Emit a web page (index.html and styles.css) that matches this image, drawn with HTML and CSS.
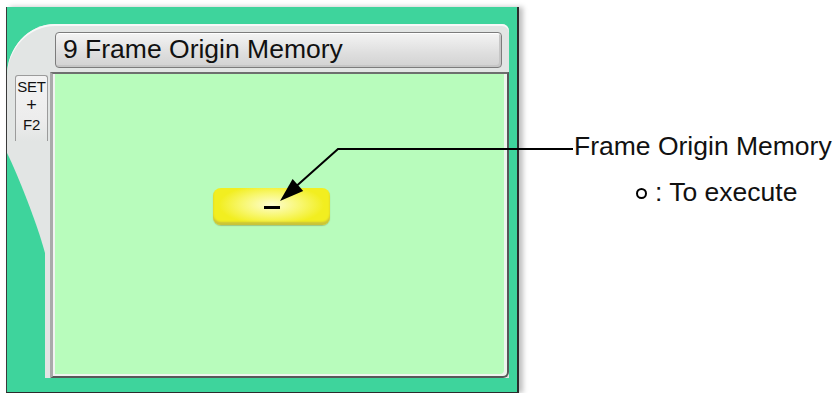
FILE: index.html
```html
<!DOCTYPE html>
<html lang="en">
<head>
    <meta charset="UTF-8">
    <meta name="viewport" content="width=device-width, initial-scale=1.0">
    <title>Frame Origin Memory</title>
    <link rel="stylesheet" href="styles.css">
</head>
<body>
    <div class="screen">
        <div class="frame">
            <div class="side">
                <div class="tab">
                    <span class="tab-line">SET</span>
                    <span class="tab-plus">+</span>
                    <span class="tab-line">F2</span>
                </div>
                <div class="tail">
                    <div class="tail-curve"></div>
                    <div class="tail-green"></div>
                </div>
            </div>
            <div class="main">
                <div class="title-bar">9 Frame Origin Memory</div>
                <div class="content">
                    <div class="value-box"><span class="dash"></span></div>
                </div>
            </div>
        </div>
    </div>

    <div class="notes">
        <p class="note-title">Frame Origin Memory</p>
        <p class="note-line"><span class="ring"></span>: To execute</p>
    </div>

    <!-- callout arrow -->
    <svg class="callout" width="838" height="393" viewBox="0 0 838 393">
        <polyline points="573,149 338,149 292,190" fill="none" stroke="#000" stroke-width="2"/>
        <polygon points="280,201 292.6,179 303.2,191" fill="#000"/>
    </svg>
</body>
</html>
```

FILE: styles.css
```css
body {
    font-family: 'Liberation Sans', Arial, sans-serif;
    background-color: #ffffff;
    margin: 0;
    padding: 0;
    width: 838px;
    height: 393px;
    overflow: hidden;
    position: relative;
    display: flex;
    align-items: flex-start;
}

.screen {
    margin: 7px 0 0 6px;
    padding: 17px 8px 14px 0;
    width: 502px;
    height: 354px;
    background-color: #3ed49c;
    border-left: 1px solid #3a3a3a;
    border-right: 2px solid #2b2b2b;
    border-bottom: 1px solid #2b2b2b;
    box-shadow: 4px 0 5px rgba(0, 0, 0, 0.25);
}

.frame {
    display: flex;
    height: 100%;
    background-color: #e2e5e4;
    border-top-left-radius: 48px 52px;
    border-top-right-radius: 7px;
    box-shadow: inset 0 2px 0 #f7f8f8;
}

/* left key tab */
.side {
    width: 43px;
    display: flex;
    flex-direction: column;
    padding-top: 51px;
}

.tab {
    margin-left: 8px;
    width: 33px;
    height: 66px;
    border: 1px solid #9b9b9b;
    border-bottom: none;
    border-radius: 3px 3px 0 0;
    background: linear-gradient(#f3f3f3, #ececec 70%, #e2e5e4);
    display: flex;
    flex-direction: column;
    align-items: center;
    padding-top: 2px;
    box-sizing: border-box;
    color: #111;
}

.tab-line {
    font-size: 15px;
    line-height: 17.4px;
    letter-spacing: -0.3px;
}

.tab-plus {
    font-size: 18px;
    line-height: 20.8px;
}

.tail {
    flex: 1;
    display: flex;
    flex-direction: column;
    padding-top: 12px;
}

.tail-curve {
    width: 38px;
    height: 100px;
    background-color: #3ed49c;
    clip-path: path('M0 0 C 10 20, 30 70, 38 100 L 0 100 Z');
}

.tail-green {
    flex: 1;
    width: 38px;
    background-color: #3ed49c;
}

/* main panel */
.main {
    flex: 1;
    display: flex;
    flex-direction: column;
}

.title-bar {
    margin: 8px 7px 0 5px;
    height: 36px;
    box-sizing: border-box;
    border: 1px solid #7c7c7c;
    border-radius: 4px;
    background: linear-gradient(#f4f4f4, #dedede 60%, #d2d2d2);
    box-shadow: inset 0 1px 0 #ffffff, inset -2px -2px 0 #c6c6c6;
    font-size: 26.5px;
    line-height: 33px;
    padding-left: 7px;
    color: #111;
}

.content {
    flex: 1;
    margin-top: 4px;
    background-color: #b8fcbc;
    border-top: 2px solid #6d6f6e;
    border-left: 3px solid #a9aaaa;
    border-right: 2px solid #575958;
    border-bottom: 2px solid #575958;
    border-bottom-right-radius: 6px;
    box-shadow: inset 2px 0 0 #f2f2f2, inset -3px -2px 0 #eef4ee;
}

.value-box {
    margin: 114px 0 0 160px;
    width: 117px;
    height: 37px;
    border-radius: 8px;
    background: radial-gradient(ellipse 45% 55% at 50% 45%, #fdfdd0 0%, #f8f770 55%, #f2ee20 100%);
    box-shadow: inset 0 -3px 2px #c9c33a, 0 1px 1px rgba(120, 120, 40, 0.4);
    display: flex;
    justify-content: center;
    align-items: center;
}

.dash {
    width: 16px;
    height: 3px;
    margin-top: 1px;
    background-color: #000;
}

/* annotation text */
.notes {
    margin-left: 55px;
    padding-top: 131px;
    color: #111;
}

.notes p {
    margin: 0;
    font-size: 26.5px;
    line-height: 30px;
    white-space: nowrap;
}

.note-line {
    margin-top: 16px !important;
    margin-left: 62px !important;
    display: flex;
    align-items: center;
}

.ring {
    width: 11px;
    height: 11px;
    border: 2px solid #000;
    border-radius: 50%;
    box-sizing: border-box;
    margin-right: 8px;
    margin-top: 2px;
}

.callout {
    position: absolute;
    left: 0;
    top: 0;
    pointer-events: none;
}
```
